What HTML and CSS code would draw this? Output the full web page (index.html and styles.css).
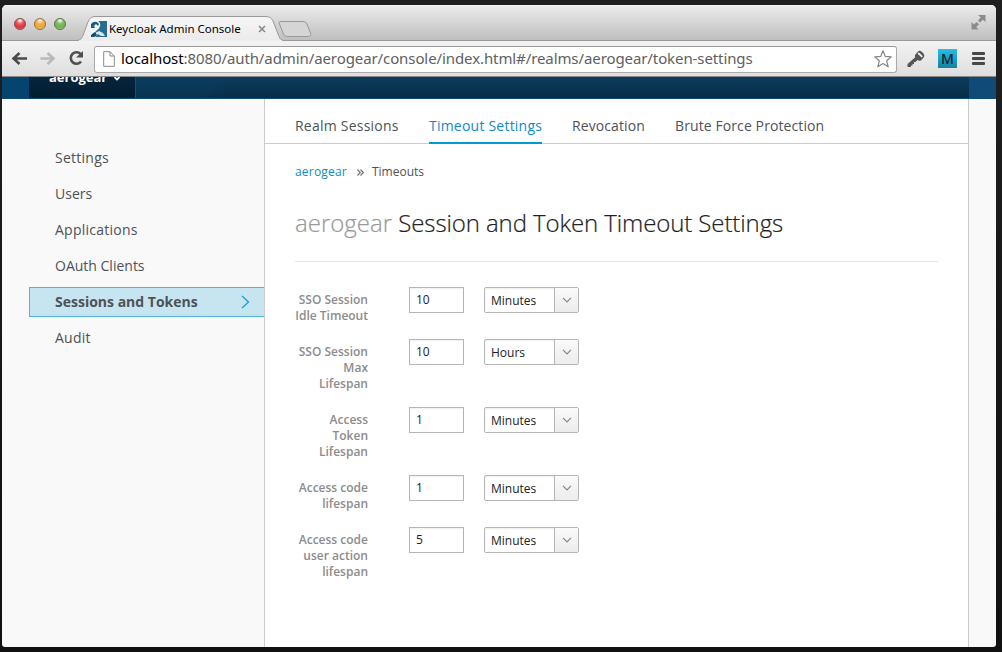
FILE: index.html
```html
<!DOCTYPE html>
<html lang="en">
<head>
<meta charset="utf-8">
<title>Keycloak Admin Console</title>
<link rel="stylesheet" href="styles.css">
</head>
<body>
<div class="window">
  <div class="titlebar">
    <div class="lights"><i class="light red"></i><i class="light amber"></i><i class="light green"></i></div>
    <div class="tab">
      <svg class="tab-shape" width="240" height="25" viewBox="0 0 240 25"><defs><linearGradient id="tg" x1="0" y1="0" x2="0" y2="1"><stop offset="0" stop-color="#f6f6f6"/><stop offset="1" stop-color="#ebebeb"/></linearGradient></defs><path d="M0 24.500C4 24 5 22 6.500 18L11 6Q13 .5 18 .5H189Q194 .5 196 5L201 18C203 22.500 203 24 207 24.500" fill="url(#tg)" stroke="#999"/><path d="M2 24.500H205" stroke="#ededed"/><path d="M206 17L202.500 8Q201 5.500 204 5.500H226Q229 5.500 230 8L233.500 17Q234.500 20.500 231 20.500H210Q207 20.500 206 17Z" fill="#d5d5d5" stroke="#999"/></svg>
      <svg class="favicon" width="16" height="16" viewBox="0 0 16 16"><rect width="16" height="16" fill="#286d93"/><path d="M0 0H7Q10 2 9 5C8 9 3 11 0 15Z" fill="#f7f7f7"/><path d="M0 3Q2 0 6 1L8 3 7 5 5 3 3 5 4 7 0 7Z" fill="#1d5d85"/><path d="M4 12L8 10 12 12 14 15H10L7 13 4 16H2Z" fill="#dbe8ef"/><path d="M0 14L4 11 6 14 3 16H0Z" fill="#134e70"/></svg>
      <span class="tab-title">Keycloak Admin Console</span>
      <svg class="tab-close" width="8" height="8" viewBox="0 0 8 8"><path d="M1 1L7 7M7 1L1 7" stroke="#888" stroke-width="1.600"/></svg>
    </div>
    <svg class="expand" width="15" height="15" viewBox="0 0 15 15"><path d="M7 0H14.500V7L12 4.700 9 7.500 7 5.500 9.700 2.500ZM.5 7L3 9.500 5.500 7 8 9.200 5.200 12 7.500 14.500H.5Z" fill="#8b8b8b"/></svg>
  </div>
  <div class="toolbar">
    <svg class="nav" width="84" height="20" viewBox="0 0 84 20"><g fill="none" stroke-width="2.600"><path d="M17 9.500H4M9.500 4L3.500 9.500 9.500 15" stroke="#4b4b4b"/><path d="M30.500 9.500H43M37.500 4L43.500 9.500 37.500 15" stroke="#b9b9b9"/><path d="M71 5.500A5.700 5.700 0 1 0 71 12.500" stroke="#505050"/></g><path d="M66 8.500H73V2Z" fill="#505050"/></svg>
    <div class="address">
      <svg width="12" height="16" viewBox="0 0 12 16"><path d="M.7.7H7L11.300 5V15.300H.7ZM7 .7V5H11.300" fill="#fff" stroke="#8b8b8b"/></svg>
      <span class="url"><b>localhost</b>:8080/auth/admin/aerogear/console/index.html#/realms/aerogear/token-settings</span>
      <svg class="star" width="18" height="18" viewBox="0 0 18 18"><path d="M9 .8L11.300 6.400 17.300 6.900 12.700 10.800 14.200 16.800 9 13.500 3.800 16.800 5.300 10.800.7 6.900 6.700 6.400Z" fill="#fff" stroke="#858585" stroke-width="1.200" stroke-linejoin="round"/></svg>
    </div>
    <svg class="key" width="18" height="18" viewBox="0 0 18 18"><path d="M8 5L11 1.500Q12.500 0 15 2L16.500 3.500Q18 5.500 17 7L14 10.500Q12 11 10.500 10L8.500 12H7V14H5.500V15.500H4V17H.5V14L8 7.500Z" fill="#555"/><path d="M11.200 3L15.300 6.800" stroke="#eee" stroke-width="1.800"/></svg>
    <div class="ext">M</div>
    <div class="menu"><i></i><i></i><i></i></div>
  </div>
  <div class="page">
    <header class="masthead">
      <div class="realm"><span>aerogear</span><svg width="8" height="6" viewBox="0 0 8 6"><path d="M1.500 1L4 3.500 6.500 1" fill="none" stroke="#fff" stroke-width="1.800"/></svg></div>
      <div class="bar"></div>
    </header>
    <div class="body">
      <nav class="side">
        <a class="wide">Settings</a><a>Users</a><a class="wide">Applications</a><a>OAuth Clients</a>
        <a class="current">Sessions and Tokens<svg width="9" height="14" viewBox="0 0 9 14"><path d="M1 1L7.500 7 1 13" fill="none" stroke="#1a9fd9" stroke-width="1.300"/></svg></a>
        <a class="wide">Audit</a>
      </nav>
      <main>
        <div class="tabs"><a class="t1">Realm Sessions</a><a class="t2 active">Timeout Settings</a><a class="t3">Revocation</a><a class="t4">Brute Force Protection</a></div>
        <div class="crumbs"><a>aerogear</a><svg width="7" height="7" viewBox="0 0 7 7"><path d="M.5.5L3.300 3.500.5 6.500M3.500.5L6.300 3.500 3.500 6.500" fill="none" stroke="#777" stroke-width="1.200"/></svg><span>Timeouts</span></div>
        <h1><span class="h-realm">aerogear</span> <span class="h-title">Session and Token Timeout Settings</span></h1>
        <form>
          <div class="row"><label>SSO Session<br>Idle Timeout</label><div class="num">10</div><div class="select"><span>Minutes</span><i><svg width="10" height="6" viewBox="0 0 10 6"><path d="M1 .8L5 4.800 9 .8" fill="none" stroke="#858585" stroke-width="1.200"/></svg></i></div></div>
          <div class="row"><label>SSO Session<br>Max<br>Lifespan</label><div class="num">10</div><div class="select"><span>Hours</span><i><svg width="10" height="6" viewBox="0 0 10 6"><path d="M1 .8L5 4.800 9 .8" fill="none" stroke="#858585" stroke-width="1.200"/></svg></i></div></div>
          <div class="row"><label>Access<br>Token<br>Lifespan</label><div class="num">1</div><div class="select"><span>Minutes</span><i><svg width="10" height="6" viewBox="0 0 10 6"><path d="M1 .8L5 4.800 9 .8" fill="none" stroke="#858585" stroke-width="1.200"/></svg></i></div></div>
          <div class="row"><label>Access code<br>lifespan</label><div class="num">1</div><div class="select"><span>Minutes</span><i><svg width="10" height="6" viewBox="0 0 10 6"><path d="M1 .8L5 4.800 9 .8" fill="none" stroke="#858585" stroke-width="1.200"/></svg></i></div></div>
          <div class="row"><label>Access code<br>user action<br>lifespan</label><div class="num">5</div><div class="select"><span>Minutes</span><i><svg width="10" height="6" viewBox="0 0 10 6"><path d="M1 .8L5 4.800 9 .8" fill="none" stroke="#858585" stroke-width="1.200"/></svg></i></div></div>
        </form>
      </main>
      <div class="gutter"></div>
    </div>
  </div>
</div>
</body>
</html>
```
FILE: styles.css
```css
* { box-sizing: border-box; }
html, body { height: 100%; }
body { margin: 0; padding: 5px 6px 5px 2px; background: linear-gradient(#1f1f1f, #111); font-family: "Open Sans", sans-serif; overflow: hidden; white-space: nowrap; }
svg { display: block; flex: none; }
.window { height: 642px; border-radius: 5px 5px 3px 3px; overflow: hidden; display: flex; flex-direction: column; background: #f9f9f9; }
.titlebar { height: 36px; flex: none; display: flex; background: linear-gradient(#ececec, #bfbfbf); border-bottom: 1px solid #999; box-shadow: inset 0 1px #f5f5f5; }
.lights { display: flex; gap: 8px; padding: 13px 0 0 12px; width: 75px; flex: none; }
.light { width: 12px; height: 12px; border-radius: 50%; border: 1px solid #77504d; }
.red { background: radial-gradient(circle at 50% 15%, #fff, #ee5a60 35%, #e0303a 70%, #f58a8c); }
.amber { background: radial-gradient(circle at 50% 15%, #fff, #f3b04e 35%, #eea33c 70%, #ffe09a); border-color: #93703f; }
.green { background: radial-gradient(circle at 50% 15%, #fff, #85bd68 35%, #71b04e 70%, #c5eea5); border-color: #52753e; }
.tab { position: relative; width: 240px; height: 25px; margin-top: 11px; display: flex; align-items: center; flex: none; }
.tab-shape { position: absolute; left: 0; top: 0; }
.favicon { position: relative; margin: 1px 2px 0 14px; }
.tab-title { position: relative; font: 11.500px "Noto Sans", sans-serif; color: #000; width: 132px; margin-right: 17px; }
.tab-close { position: relative; }
.expand { margin: 10px 10px 0 auto; }
.toolbar { height: 36px; flex: none; display: flex; align-items: center; background: linear-gradient(#f3f3f3, #dedede); border-bottom: 1px solid #888; padding: 1px 11px 0 8px; }
.address { width: 803px; height: 27px; border: 1px solid #aaa; border-top-color: #999; border-radius: 3px; background: #fff; display: flex; align-items: center; padding: 0 4px 0 8px; }
.url { font: 15px "Noto Sans", sans-serif; color: #606060; margin: -2px 0 0 6px; letter-spacing: -.095px; }
.url b { font-weight: 400; color: #000; }
.star { margin: -1px 0 0 auto; }
.key { margin: -1px 0 0 10px; }
.ext { width: 19px; height: 19px; margin: -2px 0 0 13px; background: linear-gradient(#24bfe9, #1a7f9d); color: #0b2530; font: 500 14px/19px "Noto Sans", sans-serif; text-align: center; }
.menu { margin: -1px 0 0 15px; width: 13px; display: grid; gap: 2px; }
.menu i { height: 3px; border-radius: 1px; background: #484848; }
.page { flex: 1; display: flex; flex-direction: column; min-height: 0; }
.masthead { height: 22px; flex: none; display: flex; background: linear-gradient(90deg, #04446f 27px, #0f4b76 27px); border-bottom: 1px solid #0d4c79; padding-right: 27px; }
.realm { width: 107px; margin-left: 27px; background: linear-gradient(#05253c, #021d31); border-right: 1px solid #284b63; display: flex; padding-left: 20px; overflow: hidden; color: #fff; font-size: 13px; font-weight: 700; line-height: 18px; }
.realm span { margin-top: -9px; width: 57px; }
.realm svg { margin: -1px 0 0 7px; }
.bar { flex: 1; background: linear-gradient(125deg, #0b406659 0 65px, transparent 85px), linear-gradient(#0b3b5d, #072d47); }
.body { flex: 1; display: flex; min-height: 0; }
.side { width: 262px; padding: 43px 0 0 27px; display: flex; flex-direction: column; gap: 4px; font-size: 14px; color: #4d5258; }
.side a { height: 32px; line-height: 32px; padding-left: 26px; }
.side .wide { letter-spacing: .25px; }
.side .current { height: 30px; line-height: 28px; margin: 1px 0; border: 1px solid #51b4dc; border-right: 0; background: #c7e5f0; padding: 0 14px 0 25px; display: flex; justify-content: space-between; align-items: center; font-weight: 700; }
main { flex: 1; background: #fff; border: solid #ccc; border-width: 0 1px; }
.gutter { width: 27px; }
.tabs { height: 45px; border-bottom: 1px solid #ccc; padding-left: 30px; display: flex; gap: 30px; font-size: 14px; line-height: 54px; color: #4d5258; }
.tabs a { height: 45px; }
.t1 { width: 104px; letter-spacing: .23px; }
.t2 { width: 113px; letter-spacing: .22px; }
.t3 { width: 73px; letter-spacing: .1px; }
.t4 { letter-spacing: .1px; }
.active { color: #0e8bc9; border-bottom: 2px solid #0099d3; }
.crumbs { display: flex; align-items: center; height: 20px; margin: 17px 0 0 30px; font-size: 12px; color: #4d5258; }
.crumbs a { color: #0e8bc9; letter-spacing: .2px; }
.crumbs svg { margin: 2px 8px 0 10px; }
h1 { margin: 22px 30px 0; height: 59px; border-bottom: 1px solid #e5e5e5; font-size: 24px; font-weight: 300; line-height: 40px; color: #222; -webkit-text-stroke: .2px; }
.h-realm { color: #999; }
.h-title { letter-spacing: -.1px; }
form { margin: 25px 0 0 30px; display: flex; flex-direction: column; gap: 20px; }
.row { display: flex; align-items: flex-start; }
label { width: 73px; margin-right: 41px; padding-top: 5px; text-align: right; font-size: 12px; font-weight: 600; line-height: 16px; color: #8c8c8c; margin-bottom: -5px; }
.num { width: 55px; height: 26px; border: 1px solid #b6b6b6; box-shadow: inset 0 1px 2px #0001; font-size: 12px; line-height: 24px; padding-left: 6px; color: #222; margin-right: 20px; }
.select { display: flex; width: 95px; height: 26px; border: 1px solid #b6b6b6; border-radius: 2px; font-size: 12px; line-height: 25px; color: #222; box-shadow: inset 0 1px 2px #0001; }
.select span { width: 69px; padding-left: 6px; }
.select i { flex: 1; border-left: 1px solid #b6b6b6; background: linear-gradient(#fafafa, #ececec); display: flex; align-items: center; justify-content: center; }
```
